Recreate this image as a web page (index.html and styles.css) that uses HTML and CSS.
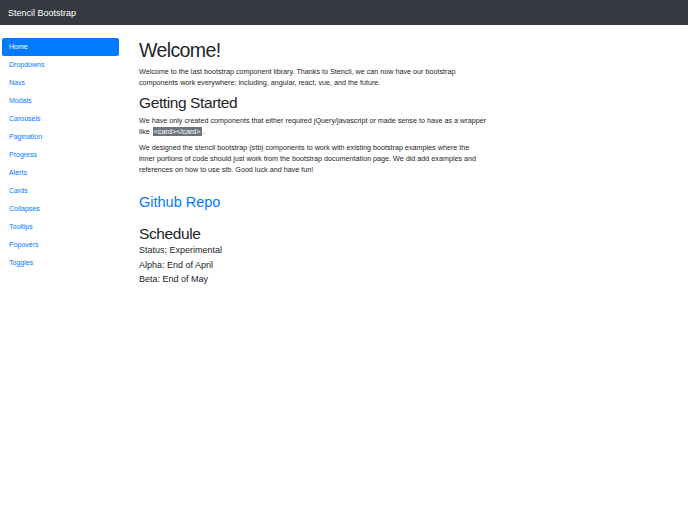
FILE: index.html
```html
<!DOCTYPE html>
<html lang="en">
<head>
  <meta charset="UTF-8" />
  <meta name="viewport" content="width=device-width, initial-scale=1.0" />
  <title>Stencil Bootstrap</title>
  <link rel="stylesheet" href="styles.css">
</head>
<body>
  <nav class="navbar">
    <span class="brand">Stencil Bootstrap</span>
  </nav>

  <div class="layout">
    <!-- Sidebar -->
    <ul class="sidenav">
      <li><a class="active" href="#">Home</a></li>
      <li><a href="#">Dropdowns</a></li>
      <li><a href="#">Navs</a></li>
      <li><a href="#">Modals</a></li>
      <li><a href="#">Carousels</a></li>
      <li><a href="#">Pagination</a></li>
      <li><a href="#">Progress</a></li>
      <li><a href="#">Alerts</a></li>
      <li><a href="#">Cards</a></li>
      <li><a href="#">Collapses</a></li>
      <li><a href="#">Tooltips</a></li>
      <li><a href="#">Popovers</a></li>
      <li><a href="#">Toggles</a></li>
    </ul>

    <!-- Main content -->
    <main class="content">
      <h1>Welcome!</h1>
      <p>Welcome to the last bootstrap component library. Thanks to Stencil, we can now have our bootstrap components work everywhere; including, angular, react, vue, and the future.</p>

      <h2>Getting Started</h2>
      <p>We have only created components that either required jQuery/javascript or made sense to have as a wrapper like <code>&lt;card&gt;&lt;/card&gt;</code>.</p>
      <p>We designed the stencil bootstrap (stb) components to work with existing bootstrap examples where the inner portions of code should just work from the bootstrap documentation page. We did add examples and references on how to use stb. Good luck and have fun!</p>

      <h3 class="repo"><a href="#">Github Repo</a></h3>

      <h2 class="schedule-title">Schedule</h2>
      <div class="schedule">
        <div>Status: Experimental</div>
        <div>Alpha: End of April</div>
        <div>Beta: End of May</div>
      </div>
    </main>
  </div>
</body>
</html>
```

FILE: styles.css
```css
body {
  margin: 0;
  font-family: "Liberation Sans", Arial, sans-serif;
  color: #212529;
  background: #fff;
}
a {
  color: #007bff;
  text-decoration: none;
}
.navbar {
  height: 25px;
  background: #343a40;
  display: flex;
  align-items: center;
  padding: 0 8px;
}
.brand {
  color: #fff;
  font-size: 9px;
}
.layout {
  display: flex;
  padding-top: 13px;
}
.sidenav {
  list-style: none;
  margin: 0;
  padding: 0 0 0 2px;
  width: 117px;
  flex-shrink: 0;
}
.sidenav a {
  display: block;
  font-size: 7px;
  line-height: 10px;
  padding: 4px 7px;
  border-radius: 2px;
}
.sidenav a.active {
  background: #007bff;
  color: #fff;
}
.content {
  margin-left: 20px;
  width: 348px;
}
h1 {
  font-size: 19.5px;
  font-weight: 400;
  letter-spacing: -0.6px;
  margin: 0 0 4px;
  line-height: 24px;
}
h2 {
  font-size: 15.5px;
  font-weight: 400;
  letter-spacing: -0.4px;
  margin: 0 0 3px;
  line-height: 19px;
}
h3.repo {
  font-size: 14.5px;
  font-weight: 400;
  margin: 18px 0 13px;
  line-height: 18px;
}
h2.schedule-title {
  margin-bottom: 0;
}
p {
  font-size: 7.2px;
  line-height: 11px;
  margin: 0 0 5px;
}
code {
  font-family: "Liberation Sans", Arial, sans-serif;
  font-size: 7.2px;
  background: #6c757d;
  color: #fff;
  padding: 0 1px;
  margin: 0 1px;
}
.schedule {
  font-size: 9px;
  line-height: 14.5px;
}
```
